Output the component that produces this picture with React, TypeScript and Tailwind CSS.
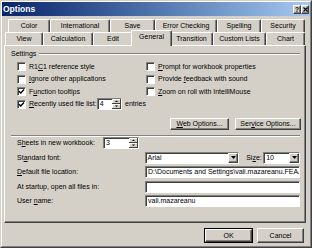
import React from "react";

const raised =
  "border border-t-white border-l-white border-r-[#404040] border-b-[#404040] shadow-[inset_-1px_-1px_0_#808080]";
const sunken =
  "border border-t-[#808080] border-l-[#808080] border-r-white border-b-white shadow-[inset_1px_1px_0_#404040]";

function Check({ checked }: { checked?: boolean }) {
  return (
    <div className={`w-[9px] h-[9px] shrink-0 bg-white flex items-center justify-center ${sunken}`}>
      {checked && (
        <svg width="7" height="7" viewBox="0 0 7 7">
          <path d="M1 3.2 L2.8 5 L6 1.6" fill="none" stroke="#000" strokeWidth="1.4" />
        </svg>
      )}
    </div>
  );
}

function CheckRow({ checked, children }: { checked?: boolean; children: React.ReactNode }) {
  return (
    <div className="flex items-center gap-[3px] h-[12.5px]">
      <Check checked={checked} />
      <span className="whitespace-nowrap">{children}</span>
    </div>
  );
}

function SpinArrows() {
  return (
    <svg width="9" height="10" viewBox="0 0 9 10" className="shrink-0">
      <rect x="0" y="0" width="9" height="10" fill="#d4d0c8" />
      <path d="M0 0 H9 M0 0 V5 M0 5 H9 M0 5 V10" stroke="#fff" strokeWidth="1" transform="translate(0.5 0.5)" />
      <path d="M0 4.5 H9 M8.5 0 V4.5 M0 9.5 H9 M8.5 5 V10" stroke="#404040" strokeWidth="1" />
      <path d="M3 3 L4.5 1.5 L6 3 Z" fill="#000" />
      <path d="M3 6.5 L4.5 8 L6 6.5 Z" fill="#000" />
    </svg>
  );
}

function Spin({ value }: { value: string }) {
  return (
    <div className={`w-[36px] h-[12px] bg-white flex items-stretch ${sunken}`}>
      <div className="flex-1 pl-[2px] leading-[10px]">{value}</div>
      <SpinArrows />
    </div>
  );
}

function ComboArrow() {
  return (
    <div className={`w-[10px] h-full bg-[#d4d0c8] flex items-center justify-center shrink-0 ${raised}`}>
      <svg width="5" height="3" viewBox="0 0 5 3">
        <path d="M0 0 H5 L2.5 3 Z" fill="#000" />
      </svg>
    </div>
  );
}

function Button({ w, children, def }: { w: string; children: React.ReactNode; def?: boolean }) {
  if (def) {
    return (
      <div className={`${w} h-full border border-black`}>
        <div className={`w-full h-full bg-[#d4d0c8] flex items-center justify-center ${raised}`}>{children}</div>
      </div>
    );
  }
  return (
    <div className={`${w} h-full bg-[#d4d0c8] flex items-center justify-center ${raised}`}>{children}</div>
  );
}

function Tab({ w, children, active }: { w: string; children: React.ReactNode; active?: boolean }) {
  if (active) {
    return (
      <div
        className={`${w} h-[16px] -mb-[1px] -mx-[2px] relative z-10 bg-[#d4d0c8] rounded-t-[2px] border-t border-l border-r border-t-white border-l-white border-r-[#404040] shadow-[inset_-1px_0_0_#808080] flex items-start pt-[2px] justify-center`}
      >
        {children}
      </div>
    );
  }
  return (
    <div
      className={`${w} h-[13px] bg-[#d4d0c8] rounded-t-[2px] border-t border-l border-r border-t-white border-l-white border-r-[#404040] shadow-[inset_-1px_0_0_#808080] flex items-center justify-center`}
    >
      {children}
    </div>
  );
}

export default function App() {
  return (
    <div className="w-[312px] h-[248px] bg-[#d4d0c8] border border-t-[#d4d0c8] border-l-[#d4d0c8] border-r-[#404040] border-b-[#404040] text-black font-['Liberation_Sans',Arial,sans-serif] text-[7px] leading-[8px] overflow-hidden">
      <div className="w-full h-full border border-t-white border-l-white border-r-[#808080] border-b-[#808080] flex flex-col">
        {/* Title bar */}
        <div className="h-[14px] shrink-0 bg-gradient-to-r from-[#0a246a] to-[#a6caf0] flex items-center justify-between pl-[1px] pr-[1px]">
          <span className="text-white font-bold text-[8.5px] leading-[10px]">Options</span>
          <div className="flex">
            <div className={`w-[8px] h-[9px] bg-[#d4d0c8] flex items-center justify-center font-bold text-[6.5px] leading-[7px] ${raised}`}>?</div>
            <div className={`w-[8px] h-[9px] bg-[#d4d0c8] flex items-center justify-center ${raised}`}>
              <svg width="5" height="5" viewBox="0 0 5 5">
                <path d="M0.5 0.5 L4.5 4.5 M4.5 0.5 L0.5 4.5" stroke="#000" strokeWidth="1.2" />
              </svg>
            </div>
          </div>
        </div>

        {/* Tabs */}
        <div className="mt-[3px] ml-[6px] flex">
          <Tab w="w-[42px]">Color</Tab>
          <Tab w="w-[60px]">International</Tab>
          <Tab w="w-[45px]">Save</Tab>
          <Tab w="w-[62px]">Error Checking</Tab>
          <Tab w="w-[44px]">Spelling</Tab>
          <Tab w="w-[44px]">Security</Tab>
        </div>
        <div className="ml-[3px] flex items-end h-[13px]">
          <Tab w="w-[38px]">View</Tab>
          <Tab w="w-[50px]">Calculation</Tab>
          <Tab w="w-[40px]">Edit</Tab>
          <Tab w="w-[41px]" active>General</Tab>
          <Tab w="w-[43px]">Transition</Tab>
          <Tab w="w-[53px]">Custom Lists</Tab>
          <Tab w="w-[39px]">Chart</Tab>
        </div>

        {/* Panel */}
        <div className={`ml-[2px] w-[302px] h-[178px] shrink-0 flex flex-col ${raised}`}>
          <div className="mt-[4px] ml-[6px] mr-[5px] h-[8px] flex items-center">
            <span>Settings</span>
            <div className="flex-1 ml-[3px] h-[2px] border-t border-t-[#808080] border-b border-b-white" />
          </div>

          <div className="mt-[2.5px] ml-[12px] flex">
            <div className="w-[129px] flex flex-col">
              <CheckRow>
                R1<u>C</u>1 reference style
              </CheckRow>
              <CheckRow>
                <u>I</u>gnore other applications
              </CheckRow>
              <CheckRow checked>
                F<u>u</u>nction tooltips
              </CheckRow>
              <div className="flex items-center h-[12.5px]">
                <Check checked />
                <span className="ml-[3px] w-[74px] whitespace-nowrap">
                  <u>R</u>ecently used file list:
                </span>
                <Spin value="4" />
                <span className="ml-[3px] whitespace-nowrap">entries</span>
              </div>
            </div>
            <div className="flex flex-col">
              <CheckRow>
                <u>P</u>rompt for workbook properties
              </CheckRow>
              <CheckRow>
                Provide <u>f</u>eedback with sound
              </CheckRow>
              <CheckRow>
                <u>Z</u>oom on roll with IntelliMouse
              </CheckRow>
            </div>
          </div>

          <div className="mt-[7px] h-[12px] flex justify-end gap-[6px] mr-[4px]">
            <Button w="w-[59px]">
              <span>
                <u>W</u>eb Options...
              </span>
            </Button>
            <Button w="w-[66px]">
              <span>
                Ser<u>v</u>ice Options...
              </span>
            </Button>
          </div>

          <div className="mt-[5px] ml-[6px] mr-[5px] h-[2px] border-t border-t-[#808080] border-b border-b-white" />

          <div className="mt-[0.5px] ml-[12px] mr-[5px] flex flex-col gap-[2.5px]">
            <div className="h-[12px] flex items-center">
              <span className="w-[86px]">
                S<u>h</u>eets in new workbook:
              </span>
              <Spin value="3" />
            </div>
            <div className="h-[12px] flex items-center">
              <span className="w-[128px]">
                St<u>a</u>ndard font:
              </span>
              <div className={`w-[95px] h-[12px] bg-white flex ${sunken}`}>
                <div className="flex-1 pl-[2px] leading-[10px]">Arial</div>
                <ComboArrow />
              </div>
              <span className="ml-[7px] w-[17px]">
                Si<u>z</u>e:
              </span>
              <div className={`w-[37px] h-[12px] bg-white flex ${sunken}`}>
                <div className="flex-1 pl-[2px] leading-[10px]">10</div>
                <ComboArrow />
              </div>
            </div>
            <div className="h-[12px] flex items-center">
              <span className="w-[128px]">
                <u>D</u>efault file location:
              </span>
              <div className={`w-[155px] h-[12px] bg-white overflow-hidden whitespace-nowrap pl-[2px] leading-[10px] ${sunken}`}>
                {"D:\\Documents and Settings\\vali.mazareanu.FEAA\\My Documents"}
              </div>
            </div>
            <div className="h-[12px] flex items-center">
              <span className="w-[128px]">At startup, open all files in:</span>
              <div className={`w-[155px] h-[12px] bg-white ${sunken}`} />
            </div>
            <div className="h-[12px] flex items-center">
              <span className="w-[128px]">
                User <u>n</u>ame:
              </span>
              <div className={`w-[155px] h-[12px] bg-white pl-[2px] leading-[10px] ${sunken}`}>vali.mazareanu</div>
            </div>
          </div>
        </div>

        {/* Bottom buttons */}
        <div className="mt-[5px] h-[15px] flex justify-end gap-[4px] mr-[6px]">
          <Button w="w-[49px]" def>
            OK
          </Button>
          <Button w="w-[47px]">Cancel</Button>
        </div>
      </div>
    </div>
  );
}
